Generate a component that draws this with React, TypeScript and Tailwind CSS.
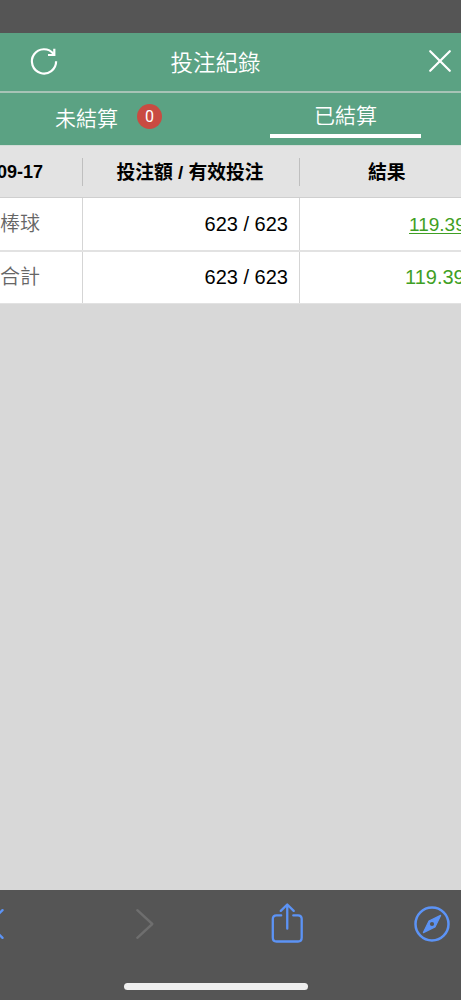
const rows = [
  { name: '棒球', stake: '623 / 623', result: '119.39', linked: true },
  { name: '合計', stake: '623 / 623', result: '119.39', linked: false },
];

function Header() {
  return (
    <header className="flex h-[58px] shrink-0 items-center bg-[#5ba283] text-white">
      <div className="w-[87px] shrink-0 pl-[29px]">
        <svg className="block" width="30" height="30" viewBox="0 0 30 30" fill="none" stroke="white" strokeWidth="2.2">
          <path d="M27.1 14.2A12.1 12.1 0 1 1 24.6 7" />
          <path d="M25.3 1.8V8H19" />
        </svg>
      </div>
      <h1 className="w-[257px] pt-[3px] text-center text-[22.5px] leading-[32px] font-[350]">投注紀錄</h1>
      <div className="flex flex-1 justify-end">
        <svg className="mr-[9px] mb-[2px] block shrink-0" width="24" height="24" viewBox="0 0 24 24" stroke="white" strokeWidth="2.2" strokeLinecap="round">
          <path d="M2.2 2.2L21.8 21.8M21.8 2.2L2.2 21.8" />
        </svg>
      </div>
    </header>
  );
}

function Tabs() {
  return (
    <nav className="flex h-[54px] shrink-0 border-t-2 border-[#a7c3b6] bg-[#5ba283] text-[21px] leading-[30px] font-[350] text-white">
      <div className="flex w-[230px] shrink-0 pt-[11px] pl-[55px]">
        <span>未結算</span>
        <span className="ml-[19px] flex h-[25px] w-[25px] items-center justify-center rounded-full bg-[#c94b41] font-['Roboto',sans-serif] text-[16px] font-normal">0</span>
      </div>
      <div className="w-[231px] pl-[40px]">
        <div className="h-[45px] w-[151px] border-b-4 border-white pt-[8px] text-center">已結算</div>
      </div>
    </nav>
  );
}

function Records() {
  return (
    <section className="w-full shrink-0 overflow-hidden">
      <div className="flex h-[53px] items-center border-t border-b border-t-[#d2dcd7] border-b-[#cfcfcf] bg-[#e3e3e3] text-[18.8px] font-bold text-black">
        <div className="flex h-[28px] w-[83px] shrink-0 items-center border-r border-[#bfbfbf]">
          <span className="-ml-[3px] pt-px text-[18px]">09-17</span>
        </div>
        <div className="flex h-[28px] w-[217px] shrink-0 items-center justify-center border-r border-[#bfbfbf] pt-[3px] pr-[2px] whitespace-nowrap">投注額 / 有效投注</div>
        <div className="w-[161px] shrink-0 pt-[3px] pl-[68px]">結果</div>
      </div>
      {rows.map((row) => (
        <div key={row.name} className="flex h-[54px] border-b-2 border-[#e2e2e2] bg-white text-[20px] leading-[53px] last:h-[52px] last:border-b last:leading-[51px]">
          <div className="w-[83px] shrink-0 border-r border-[#d5d5d5] font-[350] text-[#666666]">{row.name}</div>
          <div className="w-[217px] shrink-0 border-r border-[#d5d5d5] pr-[11px] text-right text-black">{row.stake}</div>
          <div className="w-[161px] shrink-0 overflow-hidden text-[#3f9f24]">
            {row.linked ? (
              <a className="ml-[109px] text-[19px] underline decoration-1 underline-offset-2">{row.result}</a>
            ) : (
              <span className="ml-[105px]">{row.result}</span>
            )}
          </div>
        </div>
      ))}
    </section>
  );
}

function BrowserBar() {
  return (
    <footer className="flex h-[110px] shrink-0 flex-col items-center bg-[#555555]">
      <div className="flex h-[68px] w-full items-center">
        <svg className="block shrink-0" width="135" height="32" viewBox="0 0 135 32" fill="none" stroke="#5c93f5" strokeWidth="2.4" strokeLinecap="round">
          <path d="M2.5 2.2L-12 16L2.5 29.8" />
        </svg>
        <svg className="block shrink-0" width="20" height="32" viewBox="0 0 20 32" fill="none" stroke="#6e6e6e" strokeWidth="2.4" strokeLinecap="round" strokeLinejoin="round">
          <path d="M2.3 2.2L17.3 16L2.3 29.8" />
        </svg>
        <svg className="ml-[116px] block shrink-0" width="33" height="42" viewBox="0 0 33 42" fill="none" stroke="#5c93f5" strokeWidth="2.3" strokeLinecap="round" strokeLinejoin="round">
          <path d="M10.2 12.4H5.5Q1.8 12.4 1.8 16.1V34.8Q1.8 38.5 5.5 38.5H27Q30.7 38.5 30.7 34.8V16.1Q30.7 12.4 27 12.4H22.3" />
          <path d="M16.25 25.7V1.6M9.8 7.9L16.25 1.5L22.7 7.9" />
        </svg>
        <svg className="ml-[110px] block shrink-0" width="36" height="36" viewBox="0 0 36 36">
          <circle cx="18" cy="18" r="16.5" fill="none" stroke="#5c93f5" strokeWidth="2.5" />
          <path d="M26.6 9.4L21 21L9.4 26.6L15 15Z" fill="#5c93f5" stroke="#5c93f5" strokeWidth="1.2" strokeLinejoin="round" />
          <circle cx="18" cy="18" r="2.1" fill="#555555" />
        </svg>
      </div>
      <div className="mt-[25px] mr-[29px] h-[6.5px] w-[184px] rounded-full bg-[#efefef]" />
    </footer>
  );
}

export default function App() {
  return (
    <main lang="zh-Hant" className="flex h-[1000px] w-[461px] flex-col overflow-hidden bg-[#d8d8d8] font-['Liberation_Sans','Noto_Sans_CJK_TC',sans-serif]">
      <div className="h-[33px] shrink-0 bg-[#555555]" />
      <Header />
      <Tabs />
      <Records />
      <div className="flex-1" />
      <BrowserBar />
    </main>
  );
}
